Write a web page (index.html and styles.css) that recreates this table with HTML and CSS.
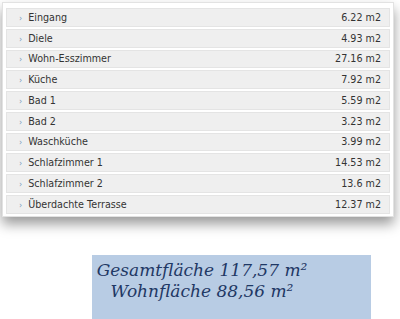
FILE: index.html
```html
<!DOCTYPE html>
<html>
<head>
<meta charset="utf-8">
<link rel="stylesheet" href="styles.css">
</head>
<body>
<div class="card">
  <ul class="rooms">
    <li class="row"><span class="name">Eingang</span><span class="area">6.22 m2</span></li>
    <li class="row"><span class="name">Diele</span><span class="area">4.93 m2</span></li>
    <li class="row"><span class="name">Wohn-Esszimmer</span><span class="area">27.16 m2</span></li>
    <li class="row"><span class="name">Küche</span><span class="area">7.92 m2</span></li>
    <li class="row"><span class="name">Bad 1</span><span class="area">5.59 m2</span></li>
    <li class="row"><span class="name">Bad 2</span><span class="area">3.23 m2</span></li>
    <li class="row"><span class="name">Waschküche</span><span class="area">3.99 m2</span></li>
    <li class="row"><span class="name">Schlafzimmer 1</span><span class="area">14.53 m2</span></li>
    <li class="row"><span class="name">Schlafzimmer 2</span><span class="area">13.6 m2</span></li>
    <li class="row"><span class="name">Überdachte Terrasse</span><span class="area">12.37 m2</span></li>
  </ul>
</div>
<div class="summary">
  <p>Gesamtfläche 117,57 m²</p>
  <p>Wohnfläche 88,56 m²</p>
</div>
</body>
</html>
```

FILE: styles.css
```css
html, body {
  margin: 0;
  padding: 0;
  background: #ffffff;
}
body {
  padding: 2px 6px 0 2px;
  font-family: "DejaVu Sans", Verdana, sans-serif;
}
.card {
  background: #ffffff;
  border: 1px solid #e2e2e2;
  padding: 5px 3px 2px 3px;
  box-shadow: 0 7px 12px rgba(0,0,0,0.4);
}
.rooms {
  list-style: none;
  margin: 0;
  padding: 0;
  display: flex;
  flex-direction: column;
  gap: 2px;
}
.row {
  display: flex;
  justify-content: space-between;
  align-items: center;
  height: 16.75px;
  padding: 0 8px 0 12px;
  background: #efefef;
  border: 1px solid #e4e4e4;
  font-size: 9.6px;
  color: #333333;
}
.name::before {
  content: "›";
  color: #7a9cc0;
  font-size: 8px;
  margin-right: 6px;
}
.summary {
  margin: 38px 0 0 90px;
  width: 279px;
  height: 70px;
  background: #b8cce4;
  padding: 5px 59px 0 0;
  box-sizing: border-box;
  text-align: center;
  font-family: "DejaVu Serif", serif;
  font-style: italic;
  color: #1f3864;
  font-size: 17px;
  line-height: 21px;
}
.summary p {
  margin: 0;
}
```
